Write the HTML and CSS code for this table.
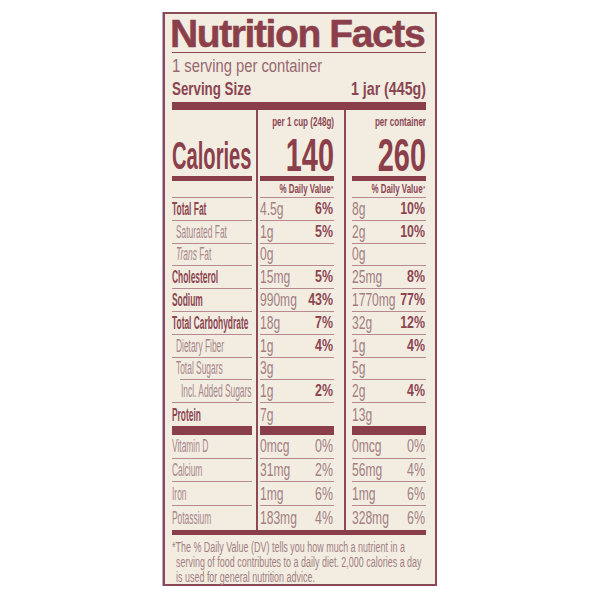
FILE: index.html
```html
<!DOCTYPE html>
<html lang="en">
<head>
<meta charset="utf-8">
<title>Nutrition Facts</title>
<link rel="stylesheet" href="styles.css">
</head>
<body>
<main class="panel">
  <h1 class="title">Nutrition Facts</h1>
  <p class="servings"><span class="tl">1 serving per container</span></p>
  <div class="size"><span class="tl">Serving Size</span><span class="tr">1 jar (445g)</span></div>
  <div class="bar-top"></div>
  <div class="grid">
    <div class="col col-l">
      <div class="head head-l"><span class="tl cal">Calories</span></div>
      <div class="bar-mid"></div>
      <div class="dv"></div>
      <div class="row"><span class="tl nb">Total Fat</span></div>
      <div class="row ind"><span class="tl nr">Saturated Fat</span></div>
      <div class="row ind"><span class="tl nr"><i>Trans</i> Fat</span></div>
      <div class="row"><span class="tl nb">Cholesterol</span></div>
      <div class="row"><span class="tl nb">Sodium</span></div>
      <div class="row"><span class="tl nb">Total Carbohydrate</span></div>
      <div class="row ind"><span class="tl nr">Dietary Fiber</span></div>
      <div class="row sub"><span class="tl nr">Total Sugars</span></div>
      <div class="row ind2"><span class="tl nr">Incl. Added Sugars</span></div>
      <div class="row last"><span class="tl nb">Protein</span></div>
      <div class="bar-low"></div>
      <div class="row m"><span class="tl nr">Vitamin D</span></div>
      <div class="row m"><span class="tl nr">Calcium</span></div>
      <div class="row m"><span class="tl nr">Iron</span></div>
      <div class="row m last"><span class="tl nr">Potassium</span></div>
    </div>
    <div class="vline vl1"></div>
    <div class="col col-v">
      <div class="head"><span class="tr per">per 1 cup (248g)</span><span class="tr big">140</span></div>
      <div class="bar-mid"></div>
      <div class="dv"><span class="tr">% Daily Value<sup>*</sup></span></div>
      <div class="row"><span class="tl v">4.5g</span><span class="tr p">6%</span></div>
      <div class="row"><span class="tl v">1g</span><span class="tr p">5%</span></div>
      <div class="row"><span class="tl v">0g</span></div>
      <div class="row"><span class="tl v">15mg</span><span class="tr p">5%</span></div>
      <div class="row"><span class="tl v">990mg</span><span class="tr p">43%</span></div>
      <div class="row"><span class="tl v">18g</span><span class="tr p">7%</span></div>
      <div class="row"><span class="tl v">1g</span><span class="tr p">4%</span></div>
      <div class="row"><span class="tl v">3g</span></div>
      <div class="row"><span class="tl v">1g</span><span class="tr p">2%</span></div>
      <div class="row last"><span class="tl v">7g</span></div>
      <div class="bar-low"></div>
      <div class="row m"><span class="tl v">0mcg</span><span class="tr pr">0%</span></div>
      <div class="row m"><span class="tl v">31mg</span><span class="tr pr">2%</span></div>
      <div class="row m"><span class="tl v">1mg</span><span class="tr pr">6%</span></div>
      <div class="row m last"><span class="tl v">183mg</span><span class="tr pr">4%</span></div>
    </div>
    <div class="vline vl2"></div>
    <div class="col col-v">
      <div class="head"><span class="tr per">per container</span><span class="tr big">260</span></div>
      <div class="bar-mid"></div>
      <div class="dv"><span class="tr">% Daily Value<sup>*</sup></span></div>
      <div class="row"><span class="tl v">8g</span><span class="tr p">10%</span></div>
      <div class="row"><span class="tl v">2g</span><span class="tr p">10%</span></div>
      <div class="row"><span class="tl v">0g</span></div>
      <div class="row"><span class="tl v">25mg</span><span class="tr p">8%</span></div>
      <div class="row"><span class="tl v">1770mg</span><span class="tr p">77%</span></div>
      <div class="row"><span class="tl v">32g</span><span class="tr p">12%</span></div>
      <div class="row"><span class="tl v">1g</span><span class="tr p">4%</span></div>
      <div class="row"><span class="tl v">5g</span></div>
      <div class="row"><span class="tl v">2g</span><span class="tr p">4%</span></div>
      <div class="row last"><span class="tl v">13g</span></div>
      <div class="bar-low"></div>
      <div class="row m"><span class="tl v">0mcg</span><span class="tr pr">0%</span></div>
      <div class="row m"><span class="tl v">56mg</span><span class="tr pr">4%</span></div>
      <div class="row m"><span class="tl v">1mg</span><span class="tr pr">6%</span></div>
      <div class="row m last"><span class="tl v">328mg</span><span class="tr pr">6%</span></div>
    </div>
  </div>
  <div class="bar-bot"></div>
  <div class="foot">
    <span class="tl">*The % Daily Value (DV) tells you how much a nutrient in a</span>
    <span class="tl ln">serving of food contributes to a daily diet. 2,000 calories a day</span>
    <span class="tl ln">is used for general nutrition advice.</span>
  </div>
</main>
</body>
</html>
```
FILE: styles.css
```css
* { box-sizing: border-box; margin: 0; padding: 0; }
html, body { background: #ffffff; }
body { font-family: "Liberation Sans", Arial, Helvetica, sans-serif; color: #8b4652; }

.panel {
  display: block;
  width: 274px;
  height: 574px;
  margin: 12px auto 0;
  padding: 1px 9px 0 7px;
  background: #f3ede1;
  border: 2px solid #8b4a56;
  box-shadow: -1px 0 0 #b3a6cf;
}

.tl { display: block; width: 0; white-space: nowrap; transform-origin: 0 50%; }
.tr { display: flex; justify-content: flex-end; width: 0; margin-left: auto; white-space: nowrap; transform-origin: 100% 50%; }

.title {
  font-size: 39px;
  line-height: 37px;
  font-weight: 700;
  letter-spacing: -1.4px;
  text-indent: -2px;
  white-space: nowrap;
  color: #8a3f4b;
  -webkit-text-stroke: 0.5px #8a3f4b;
  border-bottom: 1px solid #8b4652;
}

.servings { margin-top: 3px; font-size: 18px; line-height: 20px; color: #986770; }
.servings .tl { transform: scaleX(.82); }

.size { display: flex; margin-top: 3px; font-size: 18px; line-height: 20px; font-weight: 700; }
.size .tl { transform: scaleX(.74); }
.size .tr { transform: scaleX(.79); }

.bar-top { height: 8px; margin-top: 3px; background: #8a3e49; }

.grid { display: flex; height: 420px; }
.col { display: flex; flex-direction: column; }
.col-l { width: 80px; }
.col-v { width: 74px; }
.vline { width: 1.5px; background: #8b4a56; }
.vl1 { margin: 0 2.5px 0 4px; }
.vl2 { margin: 0 6.5px 0 10px; }

.head { height: 66px; display: flex; flex-direction: column; }
.head-l { justify-content: flex-end; }
.cal { font-size: 38px; line-height: 40px; font-weight: 700; color: #8a3f4b; transform: scaleX(.53); }
.per { margin-top: 4px; font-size: 13px; line-height: 15px; font-weight: 700; transform: scaleX(.62); }
.big { margin-top: auto; margin-bottom: 1px; font-size: 47px; line-height: 40px; font-weight: 700; color: #8a3f4b; transform: scaleX(.615); }

.bar-mid { height: 5px; background: #8a3e49; }

.dv { height: 17px; display: flex; padding-right: 1px; border-bottom: 1px solid #b68a90; }
.dv .tr { font-size: 12px; line-height: 16px; font-weight: 700; transform: scaleX(.66); }
.dv sup { font-size: 7px; vertical-align: 4px; margin-left: 1px; }

.row { height: 22.8px; display: flex; align-items: center; padding-right: 1.5px; border-bottom: 1px solid #b68a90; }
.row.last { border-bottom: 0; }
.row.m { height: 23.75px; }
.ind { padding-left: 4px; }
.ind2 { padding-left: 9px; }
.sub { margin-left: 8px; }
.sub .tl { margin-left: -4px; }

.nb { font-size: 17.5px; line-height: 20px; font-weight: 700; transform: scaleX(.48); }
.nr { font-size: 17.5px; line-height: 20px; color: #a8868b; transform: scaleX(.48); }
.v { font-size: 18px; line-height: 20px; color: #a27e83; transform: scaleX(.67); }
.p { font-size: 17px; line-height: 20px; font-weight: 700; transform: scaleX(.73); }
.pr { font-size: 18px; line-height: 20px; color: #a27e83; transform: scaleX(.69); }

.bar-low { height: 9px; background: #8a3e49; }
.bar-bot { height: 5px; background: #8a3e49; }

.foot { margin-top: 5px; font-size: 14px; line-height: 15px; color: #a27e83; }
.foot .tl { transform: scaleX(.64); }
.foot .ln { margin-left: 4px; }
```
